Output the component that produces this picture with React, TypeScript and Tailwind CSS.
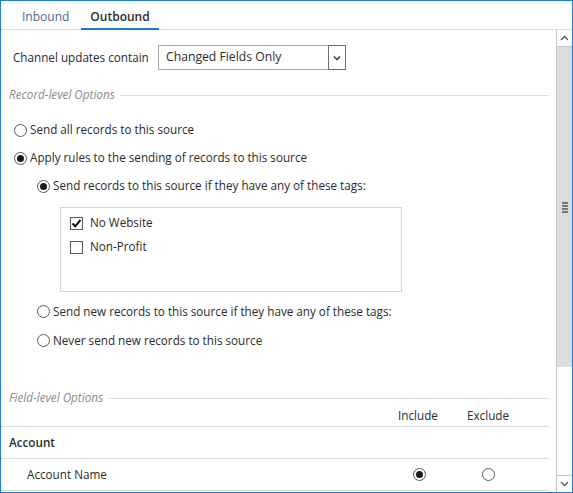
import type { ReactNode } from 'react';

const Radio = ({ checked }: { checked?: boolean }) => (
  <span className="inline-flex w-[13px] h-[13px] rounded-full border border-[#5a5a5a] bg-white items-center justify-center shrink-0">
    {checked && <span className="w-[7px] h-[7px] rounded-full bg-[#1a1a1a]" />}
  </span>
);

const Check = ({ checked }: { checked?: boolean }) => (
  <span className="inline-flex w-[13px] h-[13px] border border-[#5a5a5a] bg-white items-center justify-center shrink-0">
    {checked && (
      <svg width="11" height="11" viewBox="0 0 11 11">
        <path d="M1.5 5.5 L4.2 8.3 L9.5 2" fill="none" stroke="#111" strokeWidth="2" />
      </svg>
    )}
  </span>
);

const RadioRow = ({ checked, children, indent, h = 'h-[28px]' }: { checked?: boolean; children: ReactNode; indent?: boolean; h?: string }) => (
  <div className={`flex items-center gap-[3px] ${h} ${indent ? 'pl-[36px]' : 'pl-[13px]'}`}>
    <Radio checked={checked} />
    <span>{children}</span>
  </div>
);

const Heading = ({ label }: { label: string }) => (
  <div className="flex items-center h-[16px] pl-[8px]">
    <span className="italic text-[#8a8a8a]">{label}</span>
    <div className="flex-1 h-px bg-[#dedede] ml-[5px]" />
  </div>
);

export default function App() {
  return (
    <div
      className="w-[573px] h-[493px] border border-[#1a7bd0] bg-white flex flex-col overflow-hidden text-[11.7px] text-[#2b2b2b]"
      style={{ fontFamily: '"Open Sans", "Noto Sans", sans-serif' }}
    >
      <div className="h-[29px] shrink-0 flex items-end border-b border-[#dcdcdc] pl-[9px]">
        <div className="px-[12px] h-[28px] pt-[3px] flex items-center text-[#4a6b8c] text-[12px]">Inbound</div>
        <div className="px-[9px] h-[28px] pt-[3px] flex items-center font-semibold text-[12px] border-b-2 border-[#1a7bd0] -mb-px">Outbound</div>
      </div>
      <div className="flex-1 flex min-h-0">
        <div className="flex-1 pr-[7px] pt-[15px] min-w-0">
          <div className="flex items-center h-[25px] pl-[12px]">
            <span className="w-[145px]">Channel updates contain</span>
            <div className="flex h-[25px] w-[188px] border border-[#a9a9a9]">
              <span className="flex-1 flex items-center pl-[7px] text-[12.2px]">Changed Fields Only</span>
              <span className="w-[18px] border border-[#6e6e6e] -m-px flex items-center justify-center">
                <svg width="8" height="6" viewBox="0 0 8 6">
                  <path d="M1 1.5 L4 4.5 L7 1.5" fill="none" stroke="#333" strokeWidth="1.4" />
                </svg>
              </span>
            </div>
          </div>
          <div className="mt-[17px]">
            <Heading label="Record-level Options" />
          </div>
          <div className="mt-[13px]">
            <RadioRow>Send all records to this source</RadioRow>
            <RadioRow checked>Apply rules to the sending of records to this source</RadioRow>
            <RadioRow checked indent>Send records to this source if they have any of these tags:</RadioRow>
          </div>
          <div className="ml-[59px] mt-[7px] w-[342px] h-[85px] border border-[#d4d4d4] pt-[3px] pl-[9px]">
            <div className="flex items-center gap-[7px] h-[24px]">
              <Check checked />
              <span>No Website</span>
            </div>
            <div className="flex items-center gap-[7px] h-[24px]">
              <Check />
              <span>Non-Profit</span>
            </div>
          </div>
          <div className="mt-[5px]">
            <RadioRow indent h="h-[29px]">Send new records to this source if they have any of these tags:</RadioRow>
            <RadioRow indent h="h-[29px]">Never send new records to this source</RadioRow>
          </div>
          <div className="mt-[35px]">
            <Heading label="Field-level Options" />
          </div>
          <div className="grid grid-cols-[1fr_70px_70px_26px] -ml-px">
            <div className="h-[21px] border-b border-[#dcdcdc] col-span-4 grid grid-cols-subgrid items-center">
              <span />
              <span className="text-center">Include</span>
              <span className="text-center">Exclude</span>
              <span />
            </div>
            <div className="h-[32px] border-b border-[#dcdcdc] col-span-4 flex items-center pl-[9px] font-semibold">Account</div>
            <div className="h-[32px] border-b border-[#dcdcdc] col-span-4 grid grid-cols-subgrid items-center">
              <span className="pl-[27px]">Account Name</span>
              <span className="flex justify-center pl-[2px]"><Radio checked /></span>
              <span className="flex justify-center"><Radio /></span>
              <span />
            </div>
          </div>
        </div>
        <div className="w-[16px] shrink-0 border-l border-[#c4c4c4] flex flex-col">
          <div className="h-[17px] flex items-center justify-center border-b border-[#c4c4c4]">
            <svg width="9" height="6" viewBox="0 0 9 6">
              <path d="M1 5 L4.5 1.5 L8 5" fill="none" stroke="#555" strokeWidth="1.3" />
            </svg>
          </div>
          <div className="h-[320px] bg-[#dcdcdc] flex items-center justify-center">
            <div className="flex flex-col gap-[1px]">
              <span className="w-[6px] h-[2px] bg-[#7a7a7a]" />
              <span className="w-[6px] h-[2px] bg-[#7a7a7a]" />
              <span className="w-[6px] h-[2px] bg-[#7a7a7a]" />
              <span className="w-[6px] h-[2px] bg-[#7a7a7a]" />
            </div>
          </div>
          <div className="flex-1" />
          <div className="h-[17px] flex items-center justify-center border-t border-[#c4c4c4]">
            <svg width="9" height="6" viewBox="0 0 9 6">
              <path d="M1 1 L4.5 4.5 L8 1" fill="none" stroke="#555" strokeWidth="1.3" />
            </svg>
          </div>
        </div>
      </div>
    </div>
  );
}
